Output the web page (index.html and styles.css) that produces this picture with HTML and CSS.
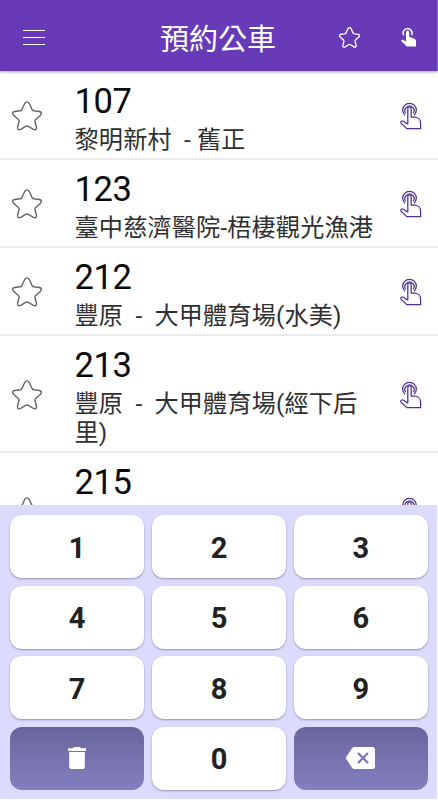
FILE: index.html
```html
<!DOCTYPE html>
<html lang="zh-Hant">
<head>
<meta charset="utf-8">
<title>預約公車</title>
<link rel="stylesheet" href="styles.css">
</head>
<body>
<svg class="defs" aria-hidden="true">
  <symbol id="star" viewBox="0 0 30 30">
    <path d="M12.7 2.5Q15-.8 17.3 2.5L20 8.4Q20.5 9.5 21.7 9.7L27.5 10.5Q30.8 11.6 28.2 14.4L23.7 18.4Q22.7 19.4 23 20.8L24.5 26.2Q24.6 29.9 21.3 28.4L16.4 25.4Q15 24.6 13.6 25.4L8.7 28.4Q5.4 29.9 5.5 26.2L7 20.8Q7.3 19.4 6.3 18.4L1.8 14.4Q-.8 11.6 2.5 10.5L8.3 9.7Q9.5 9.5 10 8.4Z"/>
  </symbol>
  <symbol id="tap" viewBox="0 0 22 28">
    <path d="M7.8 22.3V6.6Q7.8 4.8 9.5 4.8T11.2 6.6V15H14.4C18.2 15.1 20.6 17.7 20.6 21.2V26.7H6.8L1 21.1Q.4 19.9 1.4 19.2T3.6 19.2L7.8 22.3"/>
    <path d="M5.7 11.2A4.6 4.6 0 1 1 13.3 11.2M5 13.2A6.8 6.8 0 1 1 14 13.2"/>
  </symbol>
</svg>
<div class="app">
  <header class="bar">
    <svg class="menu" viewBox="0 0 22 16"><path d="M0 1.5H22M0 8.5H22M0 15.5H22"/></svg>
    <h1>預約公車</h1>
    <svg class="bar-star"><use href="#star"/></svg>
    <svg class="bar-tap" viewBox="0 0 15 20"><path class="ring" d="M2.9 8.4A4.4 4.4 0 1 1 10.4 8.2"/><path class="hand" d="M5 5Q5.1 3.5 6.6 3.5T8.2 5V9.7L13.5 11.7Q15 12.4 15 14V19.6H5.8L.2 13.9Q.4 12.4 2 12.8L5 14.6Z"/></svg>
  </header>
  <main class="list">
    <article class="row"><svg class="star"><use href="#star"/></svg><div class="text"><div class="num">107</div><div class="name">黎明新村  - 舊正</div></div><svg class="tap"><use href="#tap"/></svg></article>
    <article class="row"><svg class="star"><use href="#star"/></svg><div class="text"><div class="num">123</div><div class="name">臺中慈濟醫院-梧棲觀光漁港</div></div><svg class="tap"><use href="#tap"/></svg></article>
    <article class="row"><svg class="star"><use href="#star"/></svg><div class="text"><div class="num">212</div><div class="name">豐原  -  大甲體育場(水美)</div></div><svg class="tap"><use href="#tap"/></svg></article>
    <article class="row"><svg class="star"><use href="#star"/></svg><div class="text"><div class="num">213</div><div class="name">豐原  -  大甲體育場(經下后里)</div></div><svg class="tap"><use href="#tap"/></svg></article>
    <article class="row last"><svg class="star"><use href="#star"/></svg><div class="text"><div class="num">215</div></div><svg class="tap"><use href="#tap"/></svg></article>
  </main>
  <section class="pad">
    <button>1</button><button>2</button><button>3</button>
    <button>4</button><button>5</button><button>6</button>
    <button>7</button><button>8</button><button>9</button>
    <button class="action"><svg class="trash" viewBox="0 0 18 22"><path d="M0 1.2H5L6 0H12L13 1.2H18V4H0ZM1.2 5.1H16.8V19.4Q16.8 22 14.2 22H3.8Q1.2 22 1.2 19.4Z"/></svg></button>
    <button>0</button>
    <button class="action"><svg class="erase" viewBox="0 0 29 22"><path d="M8.2 0H26.5Q29 0 29 2.5V19.5Q29 22 26.5 22H8.2Q7 22 6.2 21L.4 12.3Q-.3 11 .4 9.7L6.2 1Q7 0 8.2 0Z"/><path class="cross" d="M12 6L22 16M22 6L12 16"/></svg></button>
  </section>
</div>
</body>
</html>
```
FILE: styles.css
```css
* { box-sizing: border-box; }
body {
  margin: 0;
  background: #fff;
  font-family: Roboto, "Noto Sans CJK TC", sans-serif;
}
.defs { display: none; }
.app {
  height: 800px;
  display: flex;
  flex-direction: column;
  overflow: hidden;
}
svg { flex: none; overflow: visible; }
.bar {
  position: relative;
  z-index: 1;
  flex: none;
  height: 71px;
  padding: 5px 21px 0 23px;
  display: flex;
  align-items: center;
  background: #673ab7;
  border-right: 1px solid #8f70cb;
  box-shadow: 0 1px 3px rgba(0, 0, 0, .35);
  color: #fff;
  fill: none;
  stroke: #fff;
}
.menu { width: 22px; height: 16px; margin-bottom: 3px; stroke-width: 1; }
.bar h1 {
  margin: 3px 0 0 115px;
  width: 179px;
  font-size: 29px;
  line-height: 40px;
  font-weight: 400;
  stroke: none;
  white-space: nowrap;
}
.bar-star { width: 21px; height: 21px; margin-bottom: 1px; stroke-width: 1.9; }
.bar-star use { transform: scale(1); }
.bar-tap { width: 15px; height: 20px; margin-left: 41px; margin-bottom: 2px; }
.ring { stroke-width: 1.5; }
.hand { fill: #fff; stroke: none; }
.list {
  flex: none;
  height: 434px;
  overflow: hidden;
}
.row {
  display: flex;
  align-items: center;
  height: 88px;
  padding: 7px 16px 5px 12px;
  border-bottom: 2px solid #ebebeb;
}
.row:first-child { height: 89px; }
.row:nth-child(4) { height: 117px; }
.star { width: 30px; height: 30px; fill: none; stroke: #666; stroke-width: 1.4; }
.tap { width: 22px; height: 28px; fill: none; stroke: #52308f; stroke-width: 1.25; }
.text { width: 310px; margin: 0 15.5px 0 32.5px; }
.num {
  font-size: 34.5px;
  line-height: 44px;
  letter-spacing: -.4px;
  color: #0a0a0a;
  margin-top: -1px;
}
.name {
  font-size: 24.2px;
  line-height: 29px;
  padding-top: 3px;
  margin-bottom: -3px;
  letter-spacing: .13px;
  color: #303030;
  white-space: pre-wrap;
}
.row.last { align-items: flex-start; height: 88px; }
.last .num { margin-top: 0; }
.last .star, .last .tap { margin-top: 37px; }
.pad {
  flex: none;
  height: 294px;
  margin-right: 1px;
  padding: 10px 9px 9px 10px;
  display: grid;
  grid-template-columns: repeat(3, 1fr);
  grid-template-rows: repeat(4, 1fr);
  gap: 7.5px;
  background: #dcdafd;
}
.pad button {
  display: flex;
  align-items: center;
  justify-content: center;
  border: 0;
  border-radius: 12px;
  padding: 3px 0 0;
  background: #fff;
  box-shadow: 0 1px 2px rgba(40, 40, 80, .4);
  color: #222;
  font: 700 29px/1 Roboto, sans-serif;
}
.pad .action {
  padding: 0;
  background: linear-gradient(#67659c, #8480c1);
  box-shadow: none;
  fill: #fff;
}
.trash { width: 18px; height: 22px; }
.erase { width: 29px; height: 22px; }
.cross { stroke: #7673ae; stroke-width: 2.2; }
```
